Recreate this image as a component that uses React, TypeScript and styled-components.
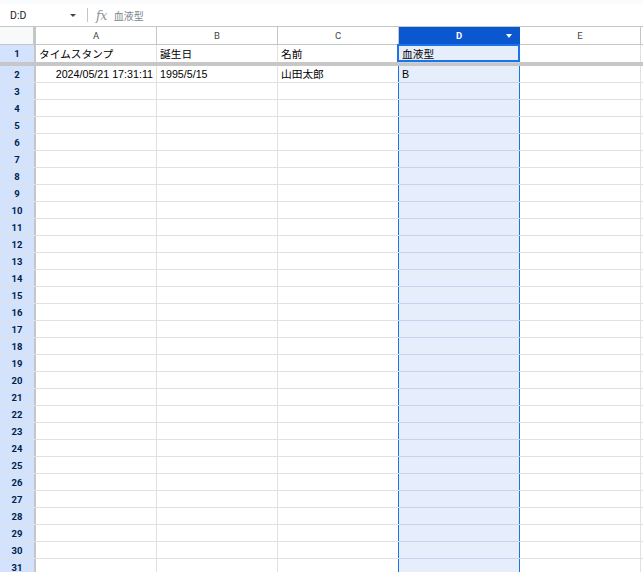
import styled, { createGlobalStyle } from "styled-components";

const GlobalStyle = createGlobalStyle`
  html, body {
    margin: 0;
    padding: 0;
    background: #ffffff;
    overflow: hidden;
  }
  body {
    font-family: "Liberation Sans", Arial, "Noto Sans CJK JP", sans-serif;
    color: #000000;
  }
`;

const Page = styled.div`
  width: 643px;
  height: 572px;
  overflow: hidden;
  background: #ffffff;
`;

const FormulaBar = styled.div`
  display: flex;
  align-items: center;
  height: 22px;
  border-top: 4px solid #f9fbfd;
  font-family: Roboto, "Liberation Sans", "Noto Sans CJK JP", sans-serif;
`;

const NameBox = styled.div`
  display: flex;
  align-items: center;
  justify-content: space-between;
  width: 66px;
  padding-left: 10px;
  font-size: 10.5px;
  color: #1f1f1f;
`;

const Caret = styled.span`
  width: 0;
  height: 0;
  border-left: 3.5px solid transparent;
  border-right: 3.5px solid transparent;
  border-top: 3.5px solid #444746;
`;

const Divider = styled.div`
  width: 1px;
  height: 14px;
  margin-left: 11px;
  background: #c4c7c5;
`;

const Fx = styled.span`
  margin-left: 8px;
  font-family: "DejaVu Serif", "Liberation Serif", serif;
  font-style: italic;
  font-size: 12.5px;
  color: #8e9398;
  letter-spacing: -0.5px;
`;

const FormulaText = styled.span`
  margin-left: 7px;
  font-family: "Liberation Sans", "Noto Sans CJK JP", sans-serif;
  font-size: 10px;
  color: #80868b;
`;

const Sheet = styled.div`
  display: flex;
  flex-direction: column;
`;

const HeaderRow = styled.div`
  display: flex;
  height: 17px;
  border-top: 1px solid #c4c7c5;
  border-bottom: 1px solid #c4c7c5;
`;

const Corner = styled.div`
  flex: 0 0 33px;
  background: #f8f9fa;
  border-right: 3px solid #c4c7c5;
`;

const ColHeader = styled.div<{ $selected?: boolean }>`
  position: relative;
  flex: 0 0 120px;
  display: flex;
  align-items: center;
  justify-content: center;
  border-right: 1px solid ${({ $selected }) => ($selected ? "#0b57d0" : "#c4c7c5")};
  background: ${({ $selected }) => ($selected ? "#0b57d0" : "#ffffff")};
  color: ${({ $selected }) => ($selected ? "#ffffff" : "#444746")};
  font-family: Roboto, "Liberation Sans", sans-serif;
  font-size: 9.5px;
  font-weight: ${({ $selected }) => ($selected ? 700 : 400)};
`;

const HeaderCaret = styled.span`
  position: absolute;
  right: 7px;
  top: 7px;
  width: 0;
  height: 0;
  border-left: 3.5px solid transparent;
  border-right: 3.5px solid transparent;
  border-top: 4px solid #ffffff;
`;

const Row = styled.div<{ $frozen?: boolean }>`
  display: flex;
  height: ${({ $frozen }) => ($frozen ? "17px" : "16px")};
  border-bottom: ${({ $frozen }) => ($frozen ? "4px solid #c7c7c7" : "1px solid #e1e1e1")};
`;

const RowHeader = styled.div`
  flex: 0 0 34px;
  display: flex;
  align-items: center;
  justify-content: center;
  background: #d3e3fd;
  border-right: 2px solid #c4c7c5;
  color: #041e49;
  font-family: Roboto, "Liberation Sans", sans-serif;
  font-size: 9.5px;
  font-weight: 700;
`;

const Cell = styled.div<{ $selected?: boolean; $align?: "left" | "right"; $active?: boolean }>`
  position: relative;
  flex: 0 0 121px;
  display: flex;
  align-items: flex-end;
  justify-content: ${({ $align }) => ($align === "right" ? "flex-end" : "flex-start")};
  padding: 0 3px 1px;
  box-sizing: border-box;
  border-right: 1px solid ${({ $selected }) => ($selected ? "#1a73e8" : "#e1e1e1")};
  background: ${({ $selected }) => ($selected ? "#e6eefc" : "#ffffff")};
  box-shadow: ${({ $selected }) => ($selected ? "-1px 0 0 #1a73e8, 0 1px 0 #c7d3ea" : "none")};
  font-size: 10.7px;
  line-height: 14px;
  white-space: nowrap;

  &::after {
    content: "";
    display: ${({ $active }) => ($active ? "block" : "none")};
    position: absolute;
    left: -2px;
    top: -1px;
    right: -1px;
    bottom: 0;
    border: 2px solid #1a73e8;
  }
`;

const columns = ["A", "B", "C", "D", "E"];
const selectedCol = 3;

const data: string[][] = [
  ["タイムスタンプ", "誕生日", "名前", "血液型", ""],
  ["2024/05/21 17:31:11", "1995/5/15", "山田太郎", "B", ""],
];

const rowCount = 31;

export default function App() {
  const rows = [...Array(rowCount)].map((_, i) => data[i] || ["", "", "", "", ""]);

  return (
    <Page>
      <GlobalStyle />
      <FormulaBar>
        <NameBox>
          D:D
          <Caret />
        </NameBox>
        <Divider />
        <Fx>fx</Fx>
        <FormulaText>血液型</FormulaText>
      </FormulaBar>

      <Sheet>
        <HeaderRow>
          <Corner />
          {columns.map((c, i) => (
            <ColHeader key={c} $selected={i === selectedCol}>
              {c}
              {i === selectedCol && <HeaderCaret />}
            </ColHeader>
          ))}
          <ColHeader />
        </HeaderRow>

        {rows.map((row, r) => (
          <Row key={r} $frozen={r === 0}>
            <RowHeader>{r + 1}</RowHeader>
            {row.map((value, c) => (
              <Cell
                key={c}
                $selected={c === selectedCol}
                $active={r === 0 && c === selectedCol}
                $align={r === 1 && c === 0 ? "right" : "left"}
              >
                {value}
              </Cell>
            ))}
            <Cell />
          </Row>
        ))}
      </Sheet>
    </Page>
  );
}
